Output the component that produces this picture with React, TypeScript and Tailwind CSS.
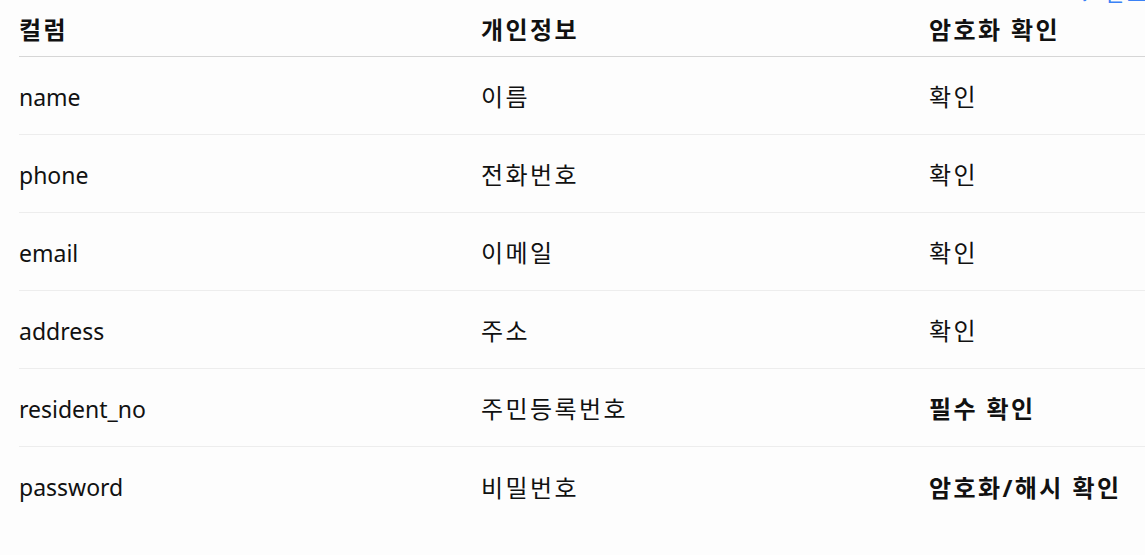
const rows = [
  { col: "name", info: "이름", check: "확인", strong: false },
  { col: "phone", info: "전화번호", check: "확인", strong: false },
  { col: "email", info: "이메일", check: "확인", strong: false },
  { col: "address", info: "주소", check: "확인", strong: false },
  { col: "resident_no", info: "주민등록번호", check: "필수 확인", strong: true },
  { col: "password", info: "비밀번호", check: "암호화/해시 확인", strong: true },
];

export default function App() {
  return (
    <div className="relative h-[555px] w-full overflow-hidden bg-[#fdfdfd] pl-[19px] font-['Noto_Sans','Noto_Sans_CJK_KR',sans-serif] text-[23px] text-[#111]">
      {/* tail of the line above, scrolled out of view */}
      <div className="absolute left-[1080px] top-[-23px] whitespace-nowrap text-[22px] leading-[30px] tracking-[2px] text-[#3b82f6]">
        ✓ 완료
      </div>

      <div className="grid h-[57px] grid-cols-[462px_448px_1fr] items-center border-b border-[#d6d6d6] pt-[3px] text-[24px] font-bold tracking-[2.4px]">
        <div>컬럼</div>
        <div>개인정보</div>
        <div>암호화 확인</div>
      </div>

      {rows.map((r) => (
        <div
          key={r.col}
          className="grid h-[78px] grid-cols-[462px_448px_1fr] items-center border-b border-[#ededed] pt-[3px] last:border-0"
        >
          <div>{r.col}</div>
          <div className="text-[24px] tracking-[2.4px]">{r.info}</div>
          <div className={r.strong ? "text-[24px] font-bold tracking-[2.4px]" : "text-[24px] tracking-[2.4px]"}>
            {r.check}
          </div>
        </div>
      ))}
    </div>
  );
}
